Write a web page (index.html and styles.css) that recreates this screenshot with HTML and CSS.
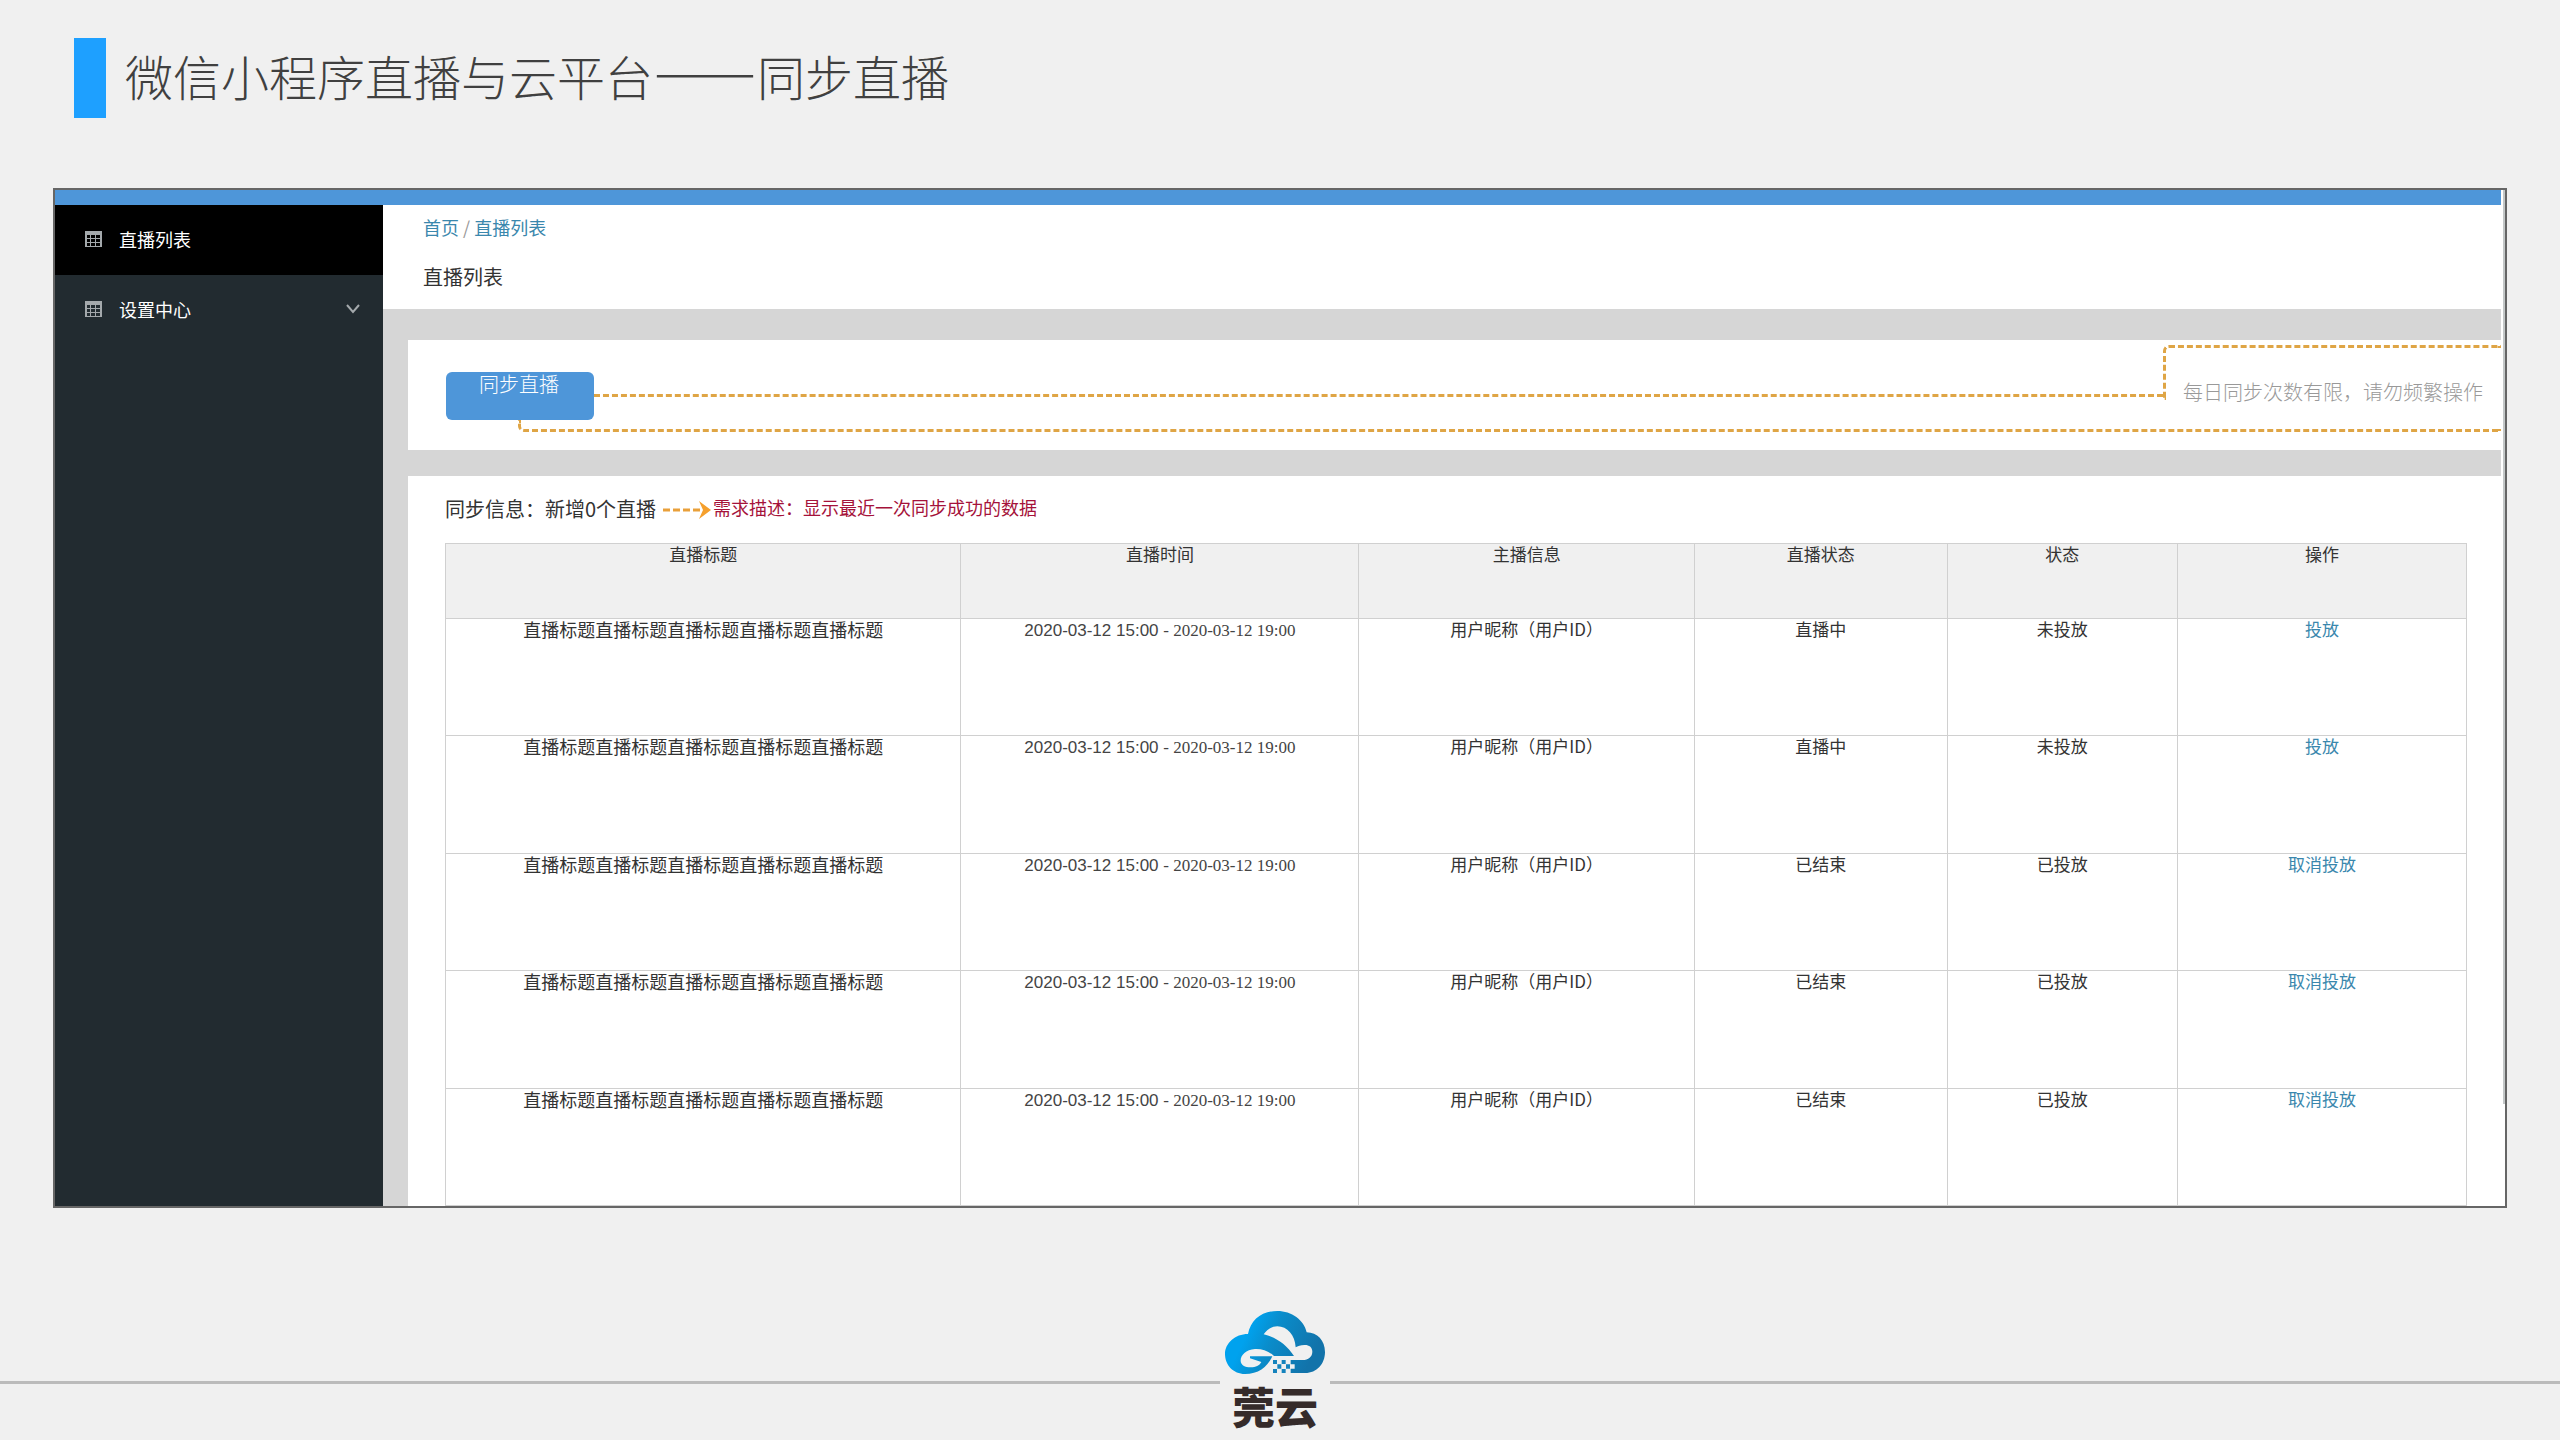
FILE: index.html
```html
<!DOCTYPE html>
<html lang="zh-CN">
<head>
<meta charset="utf-8">
<title>微信小程序直播与云平台</title>
<link rel="stylesheet" href="styles.css">
</head>
<body>
<header class="slide-head">
  <span class="accent"></span>
  <h1 class="slide-title">微信小程序直播与云平台<span class="dash">——</span>同步直播</h1>
</header>

<section class="frame">
  <div class="topbar"></div>
  <nav class="sidebar">
    <a class="nav-item active" href="#list">
      <svg class="nav-icon" viewBox="0 0 17 16"><path d="M0 0h17v16H0zM2 4v3h3V4zm4 0v3h4V4zm5 0v3h4V4zM2 8v3h3V8zm4 0v3h4V8zm5 0v3h4V8zM2 12v3h3v-3zm4 0v3h4v-3zm5 0v3h4v-3z" fill-rule="evenodd"/></svg>
      <span>直播列表</span>
    </a>
    <a class="nav-item" href="#settings">
      <svg class="nav-icon" viewBox="0 0 17 16"><path d="M0 0h17v16H0zM2 4v3h3V4zm4 0v3h4V4zm5 0v3h4V4zM2 8v3h3V8zm4 0v3h4V8zm5 0v3h4V8zM2 12v3h3v-3zm4 0v3h4v-3zm5 0v3h4v-3z" fill-rule="evenodd"/></svg>
      <span>设置中心</span>
      <svg class="chevron" viewBox="0 0 14 10"><path d="M1 1l6 7 6-7"/></svg>
    </a>
  </nav>

  <main class="main">
    <div class="page-head">
      <div class="crumbs"><a href="#home">首页</a> <span class="slash">/</span> <a href="#list">直播列表</a></div>
      <h2 class="page-title">直播列表</h2>
    </div>

    <div class="card sync">
      <button class="sync-btn" type="button">同步直播</button>
      <div class="link-line"></div>
      <p class="hint">每日同步次数有限，请勿频繁操作</p>
      <div class="link-under"></div>
    </div>

    <div class="card list">
      <div class="info">
        <span class="info-text">同步信息：新增0个直播</span>
        <svg class="arrow" viewBox="0 0 48 20"><path class="arrow-line" d="M0 10h38"/><path class="arrow-tip" d="M36 1l12 9-12 9 4-9z"/></svg>
        <span class="note">需求描述：显示最近一次同步成功的数据</span>
      </div>
      <table class="lives">
        <colgroup><col class="c-title"><col class="c-time"><col class="c-host"><col class="c-live"><col class="c-state"><col class="c-act"></colgroup>
        <thead>
          <tr><th>直播标题</th><th>直播时间</th><th>主播信息</th><th>直播状态</th><th>状态</th><th>操作</th></tr>
        </thead>
        <tbody>
          <tr><td class="name">直播标题直播标题直播标题直播标题直播标题</td><td class="time">2020-03-12 15:00 <span class="end">- 2020-03-12 19:00</span></td><td>用户昵称（用户ID）</td><td>直播中</td><td>未投放</td><td><a href="#put">投放</a></td></tr>
          <tr><td class="name">直播标题直播标题直播标题直播标题直播标题</td><td class="time">2020-03-12 15:00 <span class="end">- 2020-03-12 19:00</span></td><td>用户昵称（用户ID）</td><td>直播中</td><td>未投放</td><td><a href="#put">投放</a></td></tr>
          <tr><td class="name">直播标题直播标题直播标题直播标题直播标题</td><td class="time">2020-03-12 15:00 <span class="end">- 2020-03-12 19:00</span></td><td>用户昵称（用户ID）</td><td>已结束</td><td>已投放</td><td><a href="#cancel">取消投放</a></td></tr>
          <tr><td class="name">直播标题直播标题直播标题直播标题直播标题</td><td class="time">2020-03-12 15:00 <span class="end">- 2020-03-12 19:00</span></td><td>用户昵称（用户ID）</td><td>已结束</td><td>已投放</td><td><a href="#cancel">取消投放</a></td></tr>
          <tr><td class="name">直播标题直播标题直播标题直播标题直播标题</td><td class="time">2020-03-12 15:00 <span class="end">- 2020-03-12 19:00</span></td><td>用户昵称（用户ID）</td><td>已结束</td><td>已投放</td><td><a href="#cancel">取消投放</a></td></tr>
        </tbody>
      </table>
    </div>
  </main>
  <div class="scroll"><div class="thumb"></div></div>
</section>

<footer class="slide-foot">
  <span class="rule"></span>
  <div class="brand">
    <svg class="cloud" viewBox="135 93 300 189">
      <defs><linearGradient id="sky" x1="0" y1="0" x2="1" y2="0.3"><stop offset="0.3" stop-color="#00a2ee"/><stop offset="0.55" stop-color="#0a8cca"/><stop offset="1" stop-color="#1273aa"/></linearGradient></defs>
      <path fill="url(#sky)" d="M195 282C160 282 135 255 135 222C135 190 165 162 204 162C212 120 245 93 292 93C335 93 372 120 380 157C412 157 435 182 435 216C435 252 410 279 376 279H332V266H344V253H332V240H368C385 240 397 230 397 215C397 200 385 194 373 195C362 195 353 198 347 202C345 165 322 139 292 139C275 139 262 148 251 163C290 172 320 195 342 228H282C265 212 245 206 225 207C198 209 182 225 182 242C182 255 195 262 212 262C228 262 238 257 244 246L210 235V229H277C262 262 235 282 195 282Z"/>
      <path fill="#1583bd" d="M279 240h12v12h-12zM305 240h12v12h-12zM292 253h12v13h-12zM318 253h12v13h-12zM279 267h12v12h-12zM305 267h12v12h-12z"/>
    </svg>
    <span class="brand-name">莞云</span>
  </div>
  <span class="rule"></span>
</footer>
</body>
</html>
```

FILE: styles.css
```css
* { box-sizing: border-box; }

body {
  margin: 0;
  background: #f0f0f0;
  color: #333;
  font-family: "Noto Sans CJK SC", "Liberation Sans", sans-serif;
  font-size: 17px;
  line-height: 18px;
}

a { color: #3a87ad; text-decoration: none; }
h1, h2, p { margin: 0; font-weight: 400; }

.slide-head {
  display: flex;
  align-items: flex-start;
  gap: 19px;
  padding: 38px 74px 0;
}
.accent { width: 32px; height: 80px; background: #1ea0ff; }
.slide-title {
  font-size: 48px;
  line-height: 74px;
  font-weight: 300;
  color: #404040;
}
.dash { font-size: 52px; font-weight: 700; line-height: 48px; }

.frame {
  display: grid;
  grid-template-columns: 328px 1fr 4px;
  grid-template-rows: 15px auto;
  margin: 70px 53px 0;
  border: 2px solid #666;
  background: #fff;
}
.topbar { grid-column: 1 / 3; background: #4e96d9; }

.sidebar { grid-row: 2; background: #222b30; }
.nav-item {
  display: flex;
  align-items: center;
  gap: 17px;
  padding: 22px 23px 24px 30px;
  color: #fff;
  font-size: 18px;
  line-height: 24px;
}
.nav-item.active { background: #000; }
.nav-icon { width: 17px; height: 16px; fill: #a4a9ac; }
.chevron {
  width: 14px;
  height: 10px;
  margin-left: auto;
  fill: none;
  stroke: #a4a9ac;
  stroke-width: 2;
}

.main { grid-row: 2; min-width: 0; background: #d6d6d6; }
.scroll {
  grid-column: 3;
  grid-row: 1 / 3;
  display: flex;
  justify-content: flex-end;
}
.thumb { width: 2px; height: 90%; background: #c4c8c8; }

.page-head { padding: 10px 40px 20px; background: #fff; }
.crumbs { font-size: 18px; line-height: 24px; }
.slash { color: #999; }
.page-title { margin-top: 26px; font-size: 20px; line-height: 24px; }

.card { margin-left: 25px; background: #fff; }

.sync {
  position: relative;
  display: flex;
  align-items: flex-start;
  min-height: 110px;
  margin-top: 31px;
  padding-left: 38px;
}
.sync-btn {
  width: 148px;
  height: 48px;
  margin-top: 32px;
  padding: 0 2px 24px 0;
  border: 0;
  border-radius: 6px;
  background: #4e96d9;
  color: #fff;
  font-family: inherit;
  font-size: 20px;
  font-weight: 300;
  line-height: 24px;
}
.link-line {
  flex: 1;
  height: 57px;
  border-bottom: 3px dashed #dfa545;
}
.hint {
  position: relative;
  width: 338px;
  padding: 40px 0 0 20px;
  color: #999;
  font-size: 20px;
  font-weight: 300;
  line-height: 24px;
}
.hint::before {
  content: "";
  position: absolute;
  top: 5px;
  left: 0;
  right: 0;
  height: 52px;
  border: 3px dashed #dfa545;
  border-width: 3px 0 0 3px;
  border-top-left-radius: 6px;
}
.link-under {
  position: absolute;
  top: 80px;
  left: 110px;
  right: 0;
  height: 12px;
  border: 3px dashed #dfa545;
  border-width: 0 0 3px 3px;
  border-bottom-left-radius: 6px;
}

.list { margin-top: 26px; padding: 21px 34px 0 37px; }
.info {
  display: flex;
  align-items: flex-start;
  line-height: 24px;
  margin-bottom: 22px;
}
.info-text { font-size: 20px; }
.arrow { width: 48px; height: 20px; margin: 3px 2px 0 7px; }
.arrow-line { stroke: #e9a03a; stroke-width: 3; stroke-dasharray: 7 3; }
.arrow-tip { fill: #f5a02d; }
.note { color: #a5123a; font-size: 18px; line-height: 20px; }

.lives {
  width: 100%;
  height: 663px;
  table-layout: fixed;
  border-collapse: collapse;
  text-align: center;
}
.c-title { width: 25.5%; }
.c-time { width: 19.7%; }
.c-host { width: 16.6%; }
.c-live { width: 12.5%; }
.c-state { width: 11.4%; }
.c-act { width: 14.3%; }
.lives th, .lives td {
  padding: 0;
  border: 1px solid #d0d0d0;
  vertical-align: top;
  font-weight: 400;
}
.lives th { height: 75px; padding-top: 1px; background: #f0f0f0; }
.lives td { height: 117px; padding-top: 1px; }
.lives .name { font-size: 18px; }
.lives .time {
  color: #444;
  font-family: "Liberation Sans", Arial, sans-serif;
  line-height: 22px;
}
.end { font-family: "Liberation Serif", "Times New Roman", serif; }

.slide-foot {
  display: flex;
  align-items: flex-start;
  gap: 5px;
  margin-top: 103px;
  padding-right: 0;
}
.rule { flex: 122; height: 3px; margin-top: 70px; background: #bbb; }
.brand + .rule { flex: 123; }
.brand {
  display: flex;
  flex-direction: column;
  align-items: center;
  width: 100px;
}
.cloud { width: 100px; height: 63px; }
.brand-name {
  color: #352b2a;
  font-size: 43px;
  font-weight: 900;
  line-height: 62px;
}
```
